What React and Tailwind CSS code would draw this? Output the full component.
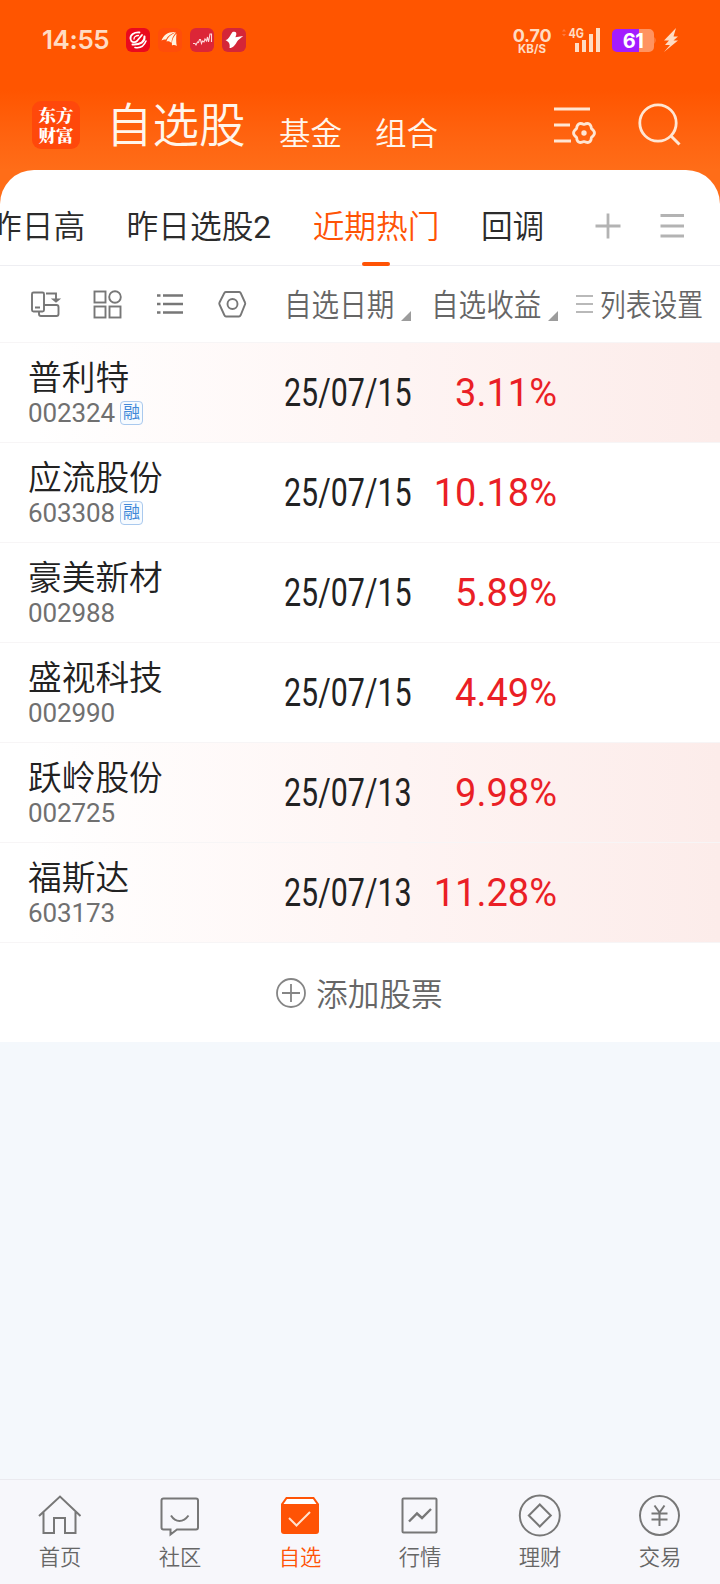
import React, { useState } from 'react';

const STOCKS = [
  { name: '普利特', code: '002324', margin: true, date: '25/07/15', gain: '3.11%', hot: true },
  { name: '应流股份', code: '603308', margin: true, date: '25/07/15', gain: '10.18%' },
  { name: '豪美新材', code: '002988', date: '25/07/15', gain: '5.89%' },
  { name: '盛视科技', code: '002990', date: '25/07/15', gain: '4.49%' },
  { name: '跃岭股份', code: '002725', date: '25/07/13', gain: '9.98%', hot: true },
  { name: '福斯达', code: '603173', date: '25/07/13', gain: '11.28%', hot: true },
];

function StatusBar() {
  return (
    <div className="flex h-[80px] items-center pl-[42px] font-['Inter','Noto_Sans_CJK_SC',sans-serif] text-[#ffdcc3]">
      <span className="w-[84px] text-[26px] leading-none font-semibold tracking-[-0.4px]">14:55</span>
      <div className="flex gap-2">
        <svg className="h-6 w-6" viewBox="0 0 24 24" fill="none">
          <rect width="24" height="24" rx="6" fill="#ea0a1e" />
          <g stroke="#fff" strokeLinecap="round">
            <path d="M13.500 4.500C8 4 4 7 4.500 11c.5 3.500 4.500 4 6.500 2l5-6" strokeWidth="1.800" />
            <path d="M12.500 7.500c-2.500 0-4.500 1.500-4.500 3.500" strokeWidth="1.300" />
            <path d="M18.500 8.500c.5 5-4 8.500-12 8" strokeWidth="2" />
            <path d="M20 13c-2 5-6 7.500-11 6.500" strokeWidth="1.600" />
          </g>
        </svg>
        <svg className="h-6 w-6" viewBox="0 0 24 24" fill="none">
          <rect width="24" height="24" rx="6" fill="#ff4d0a" />
          <path d="M3.500 12.500C5.500 7 10 3.500 18 4c-4.500 1.500-8.500 4-10 7.500-1.500-.3-3 0-4.500 1z" fill="#fff3df" />
          <path d="M8.500 13.500c1-4 4-7 9.500-9-3 3-4.500 7-4.500 10.500-1.500-1.500-3-2-5-1.500z" fill="#fff3df" />
          <path d="M14 17.500c-.5-5 1.500-9 4.500-12-.5 4-.5 9 .3 12.500-1.500-1-3-1.200-4.800-.5z" fill="#fff3df" />
        </svg>
        <svg className="h-6 w-6" viewBox="0 0 24 24" fill="none">
          <rect width="24" height="24" rx="6" fill="#dc2637" />
          <path d="M3 15.500h2l1 1.500 1.500-3 1 .5 1-3 1 0 1 4 1-2.500 1.500 1 1-3 1.500 2 1-4 1 5 1.500-8 1.500 0v8" stroke="#ffd9dc" strokeWidth="1.100" />
        </svg>
        <svg className="h-6 w-6" viewBox="0 0 24 24" fill="none">
          <rect width="24" height="24" rx="6" fill="#d42638" />
          <path d="M10.500 4c2.500-1 4.500 0 3.700 3l-.8 2.300 7.800-1.300c-2.500 2-4.900 3.700-6.400 6-1.700 3.200-4.300 6.200-7.300 6 .5-2 .2-4.500-1.200-6L3.500 12c3.500-.5 4.500-5 7-8z" fill="#fff" />
        </svg>
      </div>
      <div className="ml-[266px] flex w-[40px] flex-col items-center">
        <span className="text-[18px] leading-[18px] font-bold tracking-[-0.2px]">0.70</span>
        <span className="-mt-[1px] text-[11.5px] leading-[10px] font-bold">KB/S</span>
      </div>
      <svg className="ml-[8px] h-[28px] w-[44px]" viewBox="560 26 44 28">
        <path d="M562 31.500l2-2.500 2 2.500zM562 34l2 2.500 2-2.500z" fill="#ff7a40" />
        <text x="568.500" y="37.500" fontSize="13" fontWeight="700" fontFamily="Inter" fill="#ffdcc3" textLength="15.500" lengthAdjust="spacingAndGlyphs">4G</text>
        <path d="M575 43h4v9h-4zM582 40h4v12h-4zM589 34h4v18h-4zM596 28h4v24h-4z" fill="#ffdcc3" />
      </svg>
      <div className="relative ml-[8px] h-[24px] w-[44px]">
        <svg className="h-full w-full" viewBox="0 0 44 24">
          <path d="M5 1h22v23H5a5 5 0 0 1-5-5V6a5 5 0 0 1 5-5z" fill="#a31cff" />
          <path d="M27 1h10a5 5 0 0 1 5 5v13a5 5 0 0 1-5 5H27zM42.500 9q2 3 0 7z" fill="#ff9360" />
        </svg>
        <span className="absolute top-[1px] left-0 w-[42px] text-center text-[20px] leading-6 font-bold tracking-[-0.5px] text-white">61</span>
      </div>
      <svg className="ml-[7px] h-6 w-4" viewBox="0 0 16 24">
        <path d="M13 0L1 12.500h5L2 17h5L1 24l14-11.500h-4.500L15 8.500h-4.500z" fill="#ffdcc3" />
      </svg>
    </div>
  );
}

function Header() {
  return (
    <div className="flex h-[90px] items-start pl-[32px] text-[#fff6ec]">
      <div className="mt-[21px] flex h-[48px] w-[48px] flex-col items-center justify-center rounded-[9px] bg-[#ff480b] font-['Noto_Serif_CJK_SC','Noto_Sans_CJK_SC',sans-serif] text-[17.5px] leading-[20px] font-black text-white">
        <span>东方</span>
        <span>财富</span>
      </div>
      <h1 className="mt-[21px] ml-[26px] w-[142px] text-[46.5px] leading-[50px] font-[350]">自选股</h1>
      <span className="mt-[39px] ml-[31px] text-[31.5px] leading-[32px] font-[350]">基金</span>
      <span className="mt-[39px] ml-[33px] text-[31.5px] leading-[32px] font-[350]">组合</span>
      <svg className="mt-[20px] ml-[112px] h-[50px] w-[132px]" viewBox="550 100 132 50" fill="none" stroke="#ffe6d3">
        <path d="M554 109h36M554 125h16M554 141h17" strokeWidth="2.800" />
        <path
          transform="translate(584 133)"
          d="M7.450-4.300Q13.500 0 7.450 4.300Q6.750 11.700 0 8.600Q-6.750 11.700-7.450 4.300Q-13.500 0-7.450-4.300Q-6.750-11.700 0-8.600Q6.750-11.700 7.450-4.300z"
          strokeWidth="2.800"
          strokeLinejoin="round"
        />
        <circle cx="584" cy="133" r="2.700" fill="#ffe6d3" stroke="none" />
        <circle cx="658" cy="123" r="18.200" strokeWidth="2.800" />
        <path d="M671 136l8.500 8.500" strokeWidth="3" />
      </svg>
    </div>
  );
}

function Tabs({ active, onChange }) {
  const tab = (label, suffix) => (
    <button
      onClick={() => onChange(label)}
      className={`relative h-full whitespace-nowrap pt-[20px] ${active === label ? 'text-[#ff5305]' : 'text-[#2b2b2b]'}`}
    >
      {label}
      {suffix && <span className="font-normal">{suffix}</span>}
      {active === label && (
        <span className="absolute bottom-[-1px] left-1/2 h-[4px] w-[28px] -translate-x-1/2 rounded-full bg-[#ff5305]" />
      )}
    </button>
  );
  return (
    <div className="flex h-[96px] border-b border-[#eeeef2] text-[31.7px] leading-[43px] font-[350]">
      <div className="-ml-[10px] flex gap-[41.5px]">
        {tab('昨日高')}
        {tab('昨日选股', '2')}
        {tab('近期热门')}
        {tab('回调')}
      </div>
      <svg className="mt-[38px] ml-auto mr-[35px] h-[36px] w-[90px] shrink-0" viewBox="595 208 90 36" fill="none" stroke="#b3b3b3" strokeWidth="2.800">
        <path d="M595.500 226h25M608 213.500v25M660.500 215.500H684M660.500 226H684M660.500 236H684" />
      </svg>
    </div>
  );
}

function ColumnHead({ children }) {
  return (
    <div className="flex">
      <span className="w-[117px] whitespace-nowrap">
        <span className="inline-block origin-left scale-x-[0.89]">{children}</span>
      </span>
      <svg className="mt-[25px] h-[10px] w-[10px]" viewBox="0 0 10 10">
        <path d="M10 0v10H0z" fill="#9c9c9c" />
      </svg>
    </div>
  );
}

function Toolbar() {
  return (
    <div className="flex h-[76px] items-center pt-[3px] pl-[30px] text-[31px] leading-[40px] font-[350] text-[#666]">
      <svg className="mr-[36px] -mt-[3px] h-[36px] w-[218px] shrink-0" viewBox="30 286 218 36" fill="none" stroke="#777" strokeWidth="1.900">
        <rect x="32" y="292.500" width="12" height="19" rx="1.500" />
        <path d="M35 307.500h5M46 293.500h10v7M53.500 299.500h5l-2.500 2zM44 305h12.500q2 0 2 2v7q0 2-2 2H41q-2 0-2-2v-2" />
        <rect x="94.500" y="291.500" width="11" height="11" />
        <circle cx="115" cy="297" r="5.800" />
        <rect x="94.500" y="306.500" width="11" height="11" />
        <rect x="109.500" y="306.500" width="11" height="11" />
        <path d="M157 295.500h3.500M157 304h3.500M157 312.500h3.500M163 295.500h20M163 304h20M163 312.500h20" strokeWidth="2.500" />
        <path d="M226 292h13q1 0 1.700 1l4.300 9.500q.5 1 0 2l-4.300 10.500q-.7 1.500-1.700 1.500H226q-1 0-1.700-1.500l-4.800-10.500q-.5-1 0-2l4.800-9.500q.7-1 1.700-1z" />
        <circle cx="232.500" cy="304" r="5" />
      </svg>
      <ColumnHead>自选日期</ColumnHead>
      <div className="ml-[20px]">
        <ColumnHead>自选收益</ColumnHead>
      </div>
      <svg className="-mt-[3px] ml-[18px] h-[18px] w-[17px] shrink-0" viewBox="0 0 17 18" stroke="#b9b9b9" strokeWidth="1.800">
        <path d="M0 1h17M0 9h17M0 17h17" />
      </svg>
      <span className="ml-[7px] w-[110px] whitespace-nowrap">
        <span className="inline-block origin-left scale-x-[0.83]">列表设置</span>
      </span>
    </div>
  );
}

function StockRow({ stock }) {
  return (
    <div
      className={`flex h-[100px] items-center border-t border-[#f7f5f6] pt-[1px] pl-[28px] ${
        stock.hot ? 'bg-linear-to-r from-white from-[5%] via-[#fef4f3] via-[56%] to-[#fcecea]' : 'bg-white'
      }`}
    >
      <div className="w-[256px]">
        <div className="text-[33.7px] leading-[38px] font-[350] text-[#222]">{stock.name}</div>
        <div className="mt-[1px] flex h-[28px] items-center text-[26px] leading-[28px] text-[#707070]">
          <span className="tracking-[-0.1px]">{stock.code}</span>
          {stock.margin && (
            <span className="ml-[5px] flex h-[24px] w-[23px] items-center justify-center rounded-[4px] border border-[#a9c9ee] bg-[#f7fbff] text-[17px] leading-none text-[#4289d8]">
              融
            </span>
          )}
        </div>
      </div>
      <div className="w-[128px] text-[38.5px] leading-[44px] text-[#222]">
        <span className="inline-block origin-left scale-x-[0.79]">{stock.date}</span>
      </div>
      <div className="w-[145px] text-right text-[38px] leading-[44px] text-[#ea1f26]">{stock.gain}</div>
    </div>
  );
}

const NAV = [
  {
    label: '首页',
    icon: <path d="M2 22L23 2.500 43.500 22M6.500 18v21H17V24h11v15h10.500V18" />,
  },
  {
    label: '社区',
    icon: <path d="M6.500 4.500H39q2 0 2 2v27q0 2-2 2H20l-6.500 5v-5h-7q-2 0-2-2v-27q0-2 2-2zM14 21.500q3.500 5.500 8.500 5.500t9-5.500" />,
  },
  {
    label: '自选',
    icon: (
      <>
        <path d="M9 3h28l5 7v27q0 3-3 3H7q-3 0-3-3V10z" fill="#ff5305" stroke="none" />
        <path d="M10 5h26l3.500 5h-33z" fill="#fff" stroke="none" />
        <path d="M12 24l7.500 7.500L33 18" stroke="#ffe2cf" />
      </>
    ),
  },
  {
    label: '行情',
    icon: (
      <>
        <rect x="5.500" y="4.500" width="34" height="34" rx="1" />
        <path d="M12 27.500l8-8 5 4.500 9-9" strokeWidth="2.400" />
      </>
    ),
  },
  {
    label: '理财',
    icon: (
      <>
        <circle cx="22.800" cy="21.500" r="20" />
        <path d="M22.800 10.500l11 11-11 11-11-11z" />
      </>
    ),
  },
  {
    label: '交易',
    icon: (
      <>
        <circle cx="22.500" cy="21.500" r="19.500" />
        <path d="M17.500 11.500l5 7 5-7M14.500 19.500h16M14.500 25.500h16M22.500 18.500V32" />
      </>
    ),
  },
];

function BottomNav() {
  return (
    <nav className="grid h-[105px] grid-cols-6 border-t border-[#eaeaef] bg-[#f7f7fb]">
      {NAV.map(({ label, icon }) => (
        <div key={label} className={`flex flex-col items-center pt-[14px] ${label === '自选' ? 'text-[#ff5305]' : 'text-[#666]'}`}>
          <svg className="mr-[1px] h-[43px] w-[45px]" viewBox="0 0 45 43" fill="none" stroke={label === '自选' ? '#ff5305' : '#777'} strokeWidth="2">
            {icon}
          </svg>
          <span className="mt-[6px] text-[21.3px] leading-[30px] font-[350]">{label}</span>
        </div>
      ))}
    </nav>
  );
}

export default function App() {
  const [tab, setTab] = useState('近期热门');

  return (
    <div className="flex h-[1584px] w-[720px] flex-col overflow-hidden bg-[#f4f8fc] font-['Roboto','Noto_Sans_CJK_SC',sans-serif]">
      <div className="h-[205px] shrink-0 bg-linear-to-b from-[#ff5500] from-[44%] to-[#ff6d18] to-[83%]">
        <StatusBar />
        <Header />
      </div>
      <div className="-mt-[35px] shrink-0 overflow-hidden rounded-t-[34px] bg-white">
        <Tabs active={tab} onChange={setTab} />
        <Toolbar />
        {STOCKS.map((stock) => (
          <StockRow key={stock.code} stock={stock} />
        ))}
        <div className="flex h-[100px] items-center border-t border-[#f7f5f6] pl-[276px] text-[31.7px] leading-[40px] font-[350] text-[#666]">
          <svg className="mr-[10px] h-[30px] w-[30px]" viewBox="0 0 30 30" fill="none" stroke="#858585" strokeWidth="1.800">
            <circle cx="15" cy="15" r="14" />
            <path d="M6 15h18M15 6v18" />
          </svg>
          <span className="pt-[6px]">添加股票</span>
        </div>
      </div>
      <div className="grow" />
      <BottomNav />
    </div>
  );
}
